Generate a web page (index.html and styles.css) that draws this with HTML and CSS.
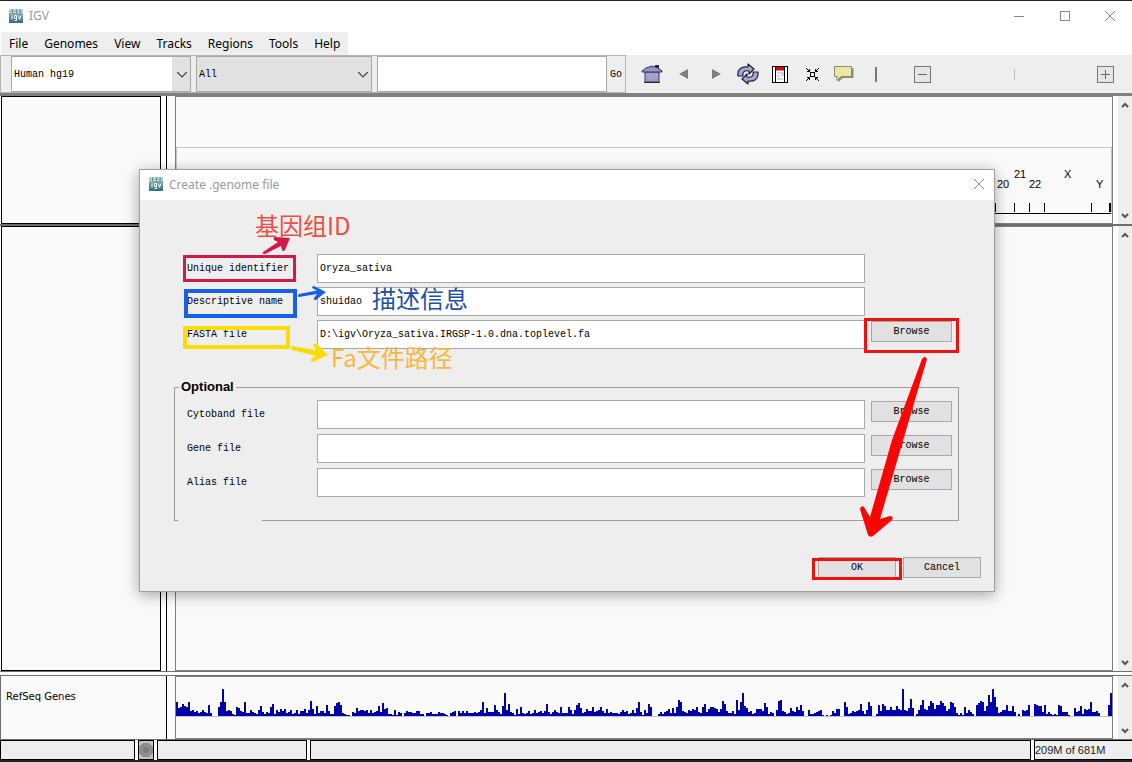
FILE: index.html
```html
<!DOCTYPE html>
<html lang="en">
<head>
<meta charset="utf-8">
<title>IGV</title>
<link rel="stylesheet" href="styles.css">
</head>
<body>
<svg class="defs" width="0" height="0" aria-hidden="true">
  <defs>
    <linearGradient id="teal" x1="0" y1="0" x2="0" y2="1"><stop offset="0" stop-color="#9cc0c8"/><stop offset="1" stop-color="#2c6f86"/></linearGradient>
    <symbol id="logo" viewBox="0 0 14 14">
      <rect width="14" height="14" fill="url(#teal)"/>
      <path d="M0 1h14M0 3.500h14" stroke="#d9d6b8" stroke-width="1.500" stroke-dasharray="3 1"/>
      <path d="M3.500 0v5M7.500 0v5M11 0v5" stroke="#5d98a6" stroke-width="1"/>
      <path d="M3 6.500v4M5.500 6.500h2v5h-2M5.500 6.500v3h2M9.500 6.500l1 4 1.500-4M3 5v.6" fill="none" stroke="#fff" stroke-width="1"/>
    </symbol>
    <symbol id="close" viewBox="0 0 10 10"><path d="M0 0l10 10M10 0L0 10" stroke="#8a8a8a" fill="none"/></symbol>
    <symbol id="down" viewBox="0 0 8 5"><path d="M0 0l4 4 4-4" stroke="#444" fill="none"/></symbol>
    <symbol id="sup" viewBox="0 0 8 6"><path d="M1 5l3-3 3 3" stroke="#555" stroke-width="2" fill="none"/></symbol>
    <symbol id="sdown" viewBox="0 0 8 6"><path d="M1 1l3 3 3-3" stroke="#555" stroke-width="2" fill="none"/></symbol>
  </defs>
</svg>
<div class="app">
  <header class="titlebar">
    <svg class="logo"><use href="#logo"/></svg>
    <span class="title">IGV</span>
    <div class="winbtns">
      <button aria-label="Minimize"><svg width="10" height="10"><path d="M0 5.500h10" stroke="#8a8a8a"/></svg></button>
      <button aria-label="Maximize"><svg width="10" height="10"><rect x=".5" y=".5" width="9" height="9" fill="none" stroke="#8a8a8a"/></svg></button>
      <button aria-label="Close"><svg width="10" height="10"><use href="#close"/></svg></button>
    </div>
  </header>
  <nav class="menubar">
    <button>File</button><button>Genomes</button><button>View</button><button>Tracks</button><button>Regions</button><button>Tools</button><button>Help</button>
  </nav>
  <div class="toolbar">
    <div class="locator">
      <div class="combo combo-genome"><select aria-label="Genome"><option>Human hg19</option></select><svg width="10" height="6"><use href="#down"/></svg></div>
      <div class="combo combo-chrom"><select aria-label="Chromosome"><option>All</option></select><svg width="10" height="6"><use href="#down"/></svg></div>
      <input class="search" type="text" aria-label="Locus">
      <button class="go">Go</button>
    </div>
    <div class="tools">
      <button aria-label="Home"><svg width="22" height="20" viewBox="0 0 22 20"><path d="M4 8h14v10H4z" fill="#9a9cc8" stroke="#34345f"/><path d="M5 10h12M5 12h12M5 14h12" stroke="#b9bae0" stroke-dasharray="1 1"/><path d="M14 1h4v5h-4z" fill="#25254a"/><path d="M1 7l4-3 6-2 6 2 4 3v1H1z" fill="#9294c4" stroke="#34345f"/><path d="M3 18.500h16" stroke="#25254a"/></svg></button>
      <button aria-label="Back"><svg width="10" height="10"><path d="M9 0v10L0 5z" fill="#7d7d7d"/></svg></button>
      <button aria-label="Forward"><svg width="10" height="10"><path d="M1 0v10l9-5z" fill="#7d7d7d"/></svg></button>
      <button aria-label="Refresh"><svg width="22" height="22" viewBox="0 0 22 22"><g fill="#a6a8d4" stroke="#1e1e3c" stroke-width="1.200" stroke-linejoin="round"><path id="rf" d="M1 13C0 6 5 3 11 4V1l6 5-5 5V8C8 7 5 9 6 13z"/><use href="#rf" transform="rotate(180 11 11)"/></g></svg></button>
      <button aria-label="Region of interest"><svg width="16" height="17"><rect x=".5" y=".5" width="15" height="16" fill="#fff" stroke="#000"/><path d="M5 7h7M5 10h3M9 9h3M5 13h6" stroke="#d6cfee" stroke-width="2"/><path d="M3.500 1v15M12.500 1v15" stroke="#000"/><path d="M4 1h8v3.500H4z" fill="#e00000"/></svg></button>
      <button aria-label="Fit to window"><svg width="13" height="13"><g fill="none" stroke="#000"><rect x="4.500" y="4.500" width="4" height="4"/><path d="M0 0l3.500 3.500M13 0L9.500 3.500M0 13l3.500-3.500M13 13L9.500 9.500M1 3.500h2.500V1M9.500 1v2.500H12M1 9.500h2.500V12M9.500 12V9.500H12"/></g></svg></button>
      <button aria-label="Popup text"><svg width="20" height="16"><path d="M3 2h16.500v10H9l-5 4v-4H2z" fill="#8b8b8b"/><path d="M.5.500h17v10H7l-4 4v-4H.5z" fill="#ebe6a4" stroke="#8d8b68"/></svg></button>
      <span class="bar"></span>
    </div>
    <div class="zoom">
      <button aria-label="Zoom out"><svg width="9" height="9"><path d="M0 4.500h9" stroke="#666"/></svg></button>
      <span class="tick"></span>
      <button aria-label="Zoom in"><svg width="9" height="9"><path d="M0 4.500h9M4.500 0v9" stroke="#666"/></svg></button>
    </div>
  </div>
  <main class="panels">
    <section class="panel panel-header">
      <div class="names"><div class="namebox"></div></div>
      <div class="data ideogram">
        <div class="ruler">
          <svg viewBox="0 0 118 66" width="118" height="66" aria-label="Chromosomes 20 to Y">
            <g class="chrlabels"><text x="4" y="40">20</text><text x="21" y="30">21</text><text x="36" y="40">22</text><text x="71" y="30">X</text><text x="103" y="40">Y</text></g>
            <path d="M2.500 55v9M21.500 55v9M36.500 55v9M51.500 55v9M98.500 55v9" stroke="#000"/><path d="M117 55v9" stroke="#000" stroke-width="2"/><path d="M0 65.500h118" stroke="#000"/>
          </svg>
        </div>
      </div>
      <div class="scroll"><svg><use href="#sup"/></svg><svg><use href="#sdown"/></svg></div>
    </section>
    <section class="panel panel-main">
      <div class="names"><div class="namebox"></div></div>
      <div class="data"></div>
      <div class="scroll"><svg><use href="#sup"/></svg><svg><use href="#sdown"/></svg></div>
    </section>
    <section class="panel panel-genes">
      <div class="names"><span class="trackname">RefSeq Genes</span></div>
      <div class="data"><svg class="density" viewBox="0 0 936 30" preserveAspectRatio="none" aria-label="Gene density"><path id="density" fill="#0000a8" shape-rendering="crispEdges"/></svg></div>
      <div class="scroll"><svg><use href="#sup"/></svg><svg><use href="#sdown"/></svg></div>
    </section>
  </main>
  <footer class="status">
    <span class="cell cell-a"></span>
    <span class="cell cell-stop"><svg width="14" height="18"><rect width="14" height="18" fill="#c4c4c4"/><path d="M4 2h6l4 4v6l-4 4H4l-4-4V6z" fill="#8c8c8c"/><circle cx="7" cy="9" r="4" fill="#7c7c7c" stroke="#999"/></svg></span>
    <span class="cell cell-b"></span>
    <span class="cell cell-msg"></span>
    <span class="cell cell-mem">209M of 681M</span>
  </footer>

  <div class="dialog" role="dialog" aria-labelledby="dlg-title">
    <div class="dlg-bar">
      <svg class="logo"><use href="#logo"/></svg>
      <span class="title" id="dlg-title">Create .genome file</span>
      <button class="dlg-close" aria-label="Close"><svg width="10" height="10"><use href="#close"/></svg></button>
    </div>
    <form class="dlg-body">
      <div class="fields">
        <label for="uid">Unique identifier</label><input id="uid" type="text" value="Oryza_sativa"><span></span>
        <label for="desc">Descriptive name</label><input id="desc" type="text" value="shuidao"><span></span>
        <label for="fasta">FASTA file</label><input id="fasta" type="text" value="D:\igv\Oryza_sativa.IRGSP-1.0.dna.toplevel.fa"><button type="button" class="btn">Browse</button>
      </div>
      <fieldset class="optional">
        <legend>Optional</legend>
        <div class="fields">
          <label for="cyto">Cytoband file</label><input id="cyto" type="text"><button type="button" class="btn">Browse</button>
          <label for="gene">Gene file</label><input id="gene" type="text"><button type="button" class="btn">Browse</button>
          <label for="alias">Alias file</label><input id="alias" type="text"><button type="button" class="btn">Browse</button>
        </div>
      </fieldset>
      <div class="actions"><button type="button" class="btn">OK</button><button type="button" class="btn">Cancel</button></div>
    </form>
    <svg class="marks" viewBox="139 169 856 423" aria-hidden="true">
      <g fill="none">
        <rect x="184.500" y="256.500" width="110" height="24" stroke="#d2194a" stroke-width="3"/>
        <rect x="186" y="291" width="109" height="25" stroke="#155fea" stroke-width="4"/>
        <rect x="185" y="328" width="103" height="19" stroke="#fbdc06" stroke-width="4"/>
        <rect x="865.500" y="319.500" width="92" height="32" stroke="#ee1111" stroke-width="3"/>
        <rect x="813.500" y="559.500" width="87" height="19" stroke="#ee1111" stroke-width="3"/>
      </g>
      <path d="M263 252L278 242 274 240q-1-3 1-3L290 238 285 250q-2 2-3 0L281 246 265 254q-3 0-2-2z" fill="#d2194a"/>
      <path d="M299 294L317 290.500 312 288q0-2 2-2L326 292 316 300q-3 0-2-2L317 294 299 297q-2-1 0-3z" fill="#155fea"/>
      <path d="M292 346L316 350 313 345q1-3 4-1L328 355 313 362q-3 0-2-3L316 356 292 350q-2-2 0-4z" fill="#fbdc06"/>
      <path d="M922 359q3-4 5 0L902 444 880 519 890 516q4 0 2 4L873 536q-3 2-5-1L860 509q1-4 4-2L870 517 892 440z" fill="#fb0404"/>
    </svg>
    <span class="note note-id" lang="zh">基因组ID</span>
    <span class="note note-desc" lang="zh">描述信息</span>
    <span class="note note-path" lang="zh">Fa文件路径</span>
  </div>
</div>
<script src="density.js"></script>
</body>
</html>
```
FILE: styles.css
```css
* { box-sizing: border-box; }
body { margin: 0; font-family: "Noto Sans", "Noto Sans CJK SC", sans-serif; font-size: 12px; color: #111; background: #fff; }
button { border: 0; padding: 0; margin: 0; background: none; font: inherit; color: inherit; display: flex; align-items: center; justify-content: center; }
input, select { font: inherit; color: inherit; border-radius: 0; min-width: 0; }
svg { display: block; }
.defs { position: absolute; }
.app { position: relative; display: flex; flex-direction: column; min-height: 100vh; border-top: 1px solid #222; border-bottom: 2px solid #222; }

.titlebar, .dlg-bar { display: flex; align-items: center; height: 30px; padding: 0 0 2px 9px; gap: 6px; background: #fff; color: #999; }
.titlebar { height: 31px; }
.logo { width: 14px; height: 14px; }
.winbtns { margin-left: auto; display: flex; }
.winbtns button { width: 46px; height: 28px; }
.winbtns button:last-child { width: 44px; }

.menubar { display: flex; align-self: flex-start; height: 23px; margin-left: 1px; padding-bottom: 1px; background: #eee; }
.menubar button { padding: 0 8px; color: #000; }

.toolbar { display: flex; align-items: center; height: 39px; background: #eee; border-bottom: 1px solid #808080; }
.locator { display: flex; align-items: stretch; height: 38px; padding-left: 10px; border: 1px solid #b4b4b4; font-family: "Liberation Mono", monospace; font-size: 10px; color: #000; }
.combo { position: relative; margin-right: 5px; border: 1px solid #a8a8a8; background: #e1e1e1; display: flex; }
.combo select { appearance: none; border: 0; padding: 0 2px; width: 100%; background: transparent; }
.combo svg { position: absolute; right: 3px; top: 15px; }
.combo-genome { width: 180px; }
.combo-genome select { margin-right: 18px; background: #fff; }
.combo-chrom { width: 176px; }
.search { width: 230px; border: 1px solid #a8a8a8; background: #fff; }
.go { width: 18px; }
.tools { display: flex; align-items: center; margin-left: 10px; }
.tools button, .bar { width: 32px; height: 32px; }
.bar { display: flex; align-items: center; justify-content: center; }
.bar::before { content: ""; width: 2px; height: 15px; background: #777; }
.zoom { flex: 1; display: flex; align-items: center; justify-content: space-between; margin: 0 18px 0 22px; }
.zoom button { width: 17px; height: 17px; border: 1px solid #777; background: #e6e6e6; }
.tick { width: 1px; height: 11px; background: #bbb; }

.panels { flex: 1; display: flex; flex-direction: column; border-top: 2px solid #808080; background: #fff; }
.panel { display: grid; grid-template-columns: 167px 1fr 19px; }
.panel-header { height: 128px; }
.panel-main { flex: 1; border-top: 2px solid #6e6e6e; border-bottom: 1px solid #6e6e6e; }
.panel-genes { height: 65px; margin-top: 3px; border: solid #6e6e6e; border-width: 1px 0; }
.names { border-right: 1px solid #000; display: flex; background: #fff; }
.namebox { flex: 1; margin: 0 5px 0 1px; border: 1px solid #000; background: #fafafa; }
.panel-genes .names { background: #fafafa; border-left: 1px solid #6e6e6e; }
.trackname { padding: 14px 5px; font: 10px/14px "DejaVu Sans", sans-serif; color: #000; }
.data { margin-left: 8px; border: 1px solid #808080; background: #fafafa; min-width: 0; display: flex; flex-direction: column; }
.ideogram { padding-top: 50px; }
.ruler { border: 1px solid #c4c4c4; border-bottom: 0; display: flex; justify-content: flex-end; }
.chrlabels { font: 11px "Liberation Sans", sans-serif; fill: #000; }
.density { width: 100%; height: 30px; margin-top: 10px; border-bottom: 1px solid #c3c0da; }
.scroll { margin-left: 5px; background: #eee; display: flex; flex-direction: column; justify-content: space-between; align-items: center; padding: 6px 0 5px; }
.scroll svg { width: 8px; height: 6px; }

.status { display: flex; gap: 3px; height: 20px; background: #fff; }
.cell { border: 1px solid #000; background: #eee; }
.cell-a { width: 135px; }
.cell-stop { width: 16px; overflow: hidden; }
.cell-b { width: 150px; }
.cell-msg { flex: 1; }
.cell-mem { width: 98px; border-right: 0; font: 11px/18px "Liberation Sans", sans-serif; color: #222; }

.dialog { position: absolute; left: 139px; top: 168px; width: 856px; border: 1px solid #a0a0a0; background: #eee; box-shadow: 0 3px 14px rgba(0, 0, 0, .35); }
.dlg-close { margin-left: auto; width: 30px; height: 28px; }
.dlg-body { padding: 54px 13px 13px 34px; font-family: "Liberation Mono", monospace; font-size: 10px; color: #000; }
.fields { display: grid; grid-template-columns: 124px 1fr 81px; grid-auto-rows: 29px; gap: 4px 6px; margin-left: 13px; margin-right: 29px; align-items: center; }
.fields input { height: 29px; padding: 0 2px; border: 1px solid #a8a8a8; background: #fff; line-height: 18px; }
.btn { height: 21px; border: 1px solid #a8a8a8; background: #e1e1e1; }
.fields .btn { align-self: start; margin-top: 1px; }
.optional { position: relative; margin: 30px 22px 0 0; padding: 5px 6px 23px 12px; border: 1px solid #9c9c9c; min-width: 0; }
.optional legend { margin-left: -8px; padding: 0 2px; font: bold 13px/16px "Liberation Sans", sans-serif; }
.optional .fields { margin: 0; row-gap: 5px; }
.optional::after { content: ""; position: absolute; left: 3px; bottom: -1px; width: 84px; height: 1px; background: #eee; }
.actions { display: flex; justify-content: flex-end; gap: 7px; margin-top: 36px; }
.actions .btn { width: 78px; }
.marks { position: absolute; left: -1px; top: -1px; width: 856px; height: 423px; pointer-events: none; }
.note { position: absolute; font: 24px/28px "Noto Sans CJK SC", sans-serif; white-space: nowrap; }
.note-id { left: 115px; top: 41px; color: #ec4f45; }
.note-desc { left: 232px; top: 114px; color: #1d4fa5; }
.note-path { left: 191px; top: 173px; color: #f7b93a; }
```
FILE: density.js
```js
// Gene counts per bin, drawn as equal-width bars on a 30-unit-high baseline.
const bins = [
14,8,9,12,10,9,14,5,6,4,5,3,4,6,4,3,11,3,0,0,0,9,14,28,14,5,6,5,2,1,9,8,5,4,14,3,3,6,4,3,2,6,10,4,2,4,3,9,12,2,6,
4,7,5,7,3,4,6,2,3,6,2,5,5,7,3,6,16,7,2,10,3,5,5,3,11,5,2,2,10,13,15,11,3,2,1,1,0,4,3,8,5,6,6,5,6,3,6,3,4,5,10,
4,13,7,8,2,2,1,6,1,4,3,0,3,5,4,4,3,3,5,5,2,2,0,3,3,4,2,2,2,4,3,3,2,1,0,3,4,5,0,5,3,5,3,5,3,3,3,4,3,4,6,15,3,8,4,
4,4,11,6,4,2,10,24,6,12,4,3,1,7,2,9,3,2,3,5,2,3,6,3,4,5,3,5,12,4,2,4,6,4,3,9,3,3,3,9,6,2,6,11,13,8,3,4,7,5,5,9,4,
5,6,9,5,3,7,3,4,3,3,3,2,4,6,4,5,2,3,6,3,8,15,4,1,6,3,12,9,0,0,0,2,4,2,4,5,7,3,8,3,9,17,15,5,4,3,6,5,7,6,9,4,3,9,
12,4,7,9,9,8,7,4,7,16,12,5,3,3,5,2,17,6,14,24,10,8,4,5,2,3,7,7,
7,5,13,9,2,4,3,0,6,16,17,5,4,2,3,8,5,4,9,6,11,5,0,0,6,2,2,3,4,5,6,1,0,1,0,1,5,3,7,7,0,0,15,9,2,3,5,4,5,6,12,5,2,
6,14,10,0,0,2,11,5,12,10,6,6,9,6,6,10,7,6,28,6,5,8,18,8,0,2,6,11,17,7,6,10,16,13,7,11,11,16,13,10,5,7,15,13,9,3,1,
3,1,9,3,6,4,2,0,11,13,16,14,5,10,22,14,28,20,9,3,4,6,6,11,5,5,10,4,0,2,0,6,5,6,11,0,0,12,11,10,10,4,11,2,4,2,1,2,
1,11,10,4,4,4,1,0,0,8,4,5,10,2,7,6,7,14,4,4,5,3,0,0,0,0,11,24
];
const step = 936 / bins.length;
document.getElementById("density").setAttribute(
  "d",
  bins.map((h, i) => (h ? `M${i * step} 30v${-h}h${step}v${h}z` : "")).join("")
);
```
